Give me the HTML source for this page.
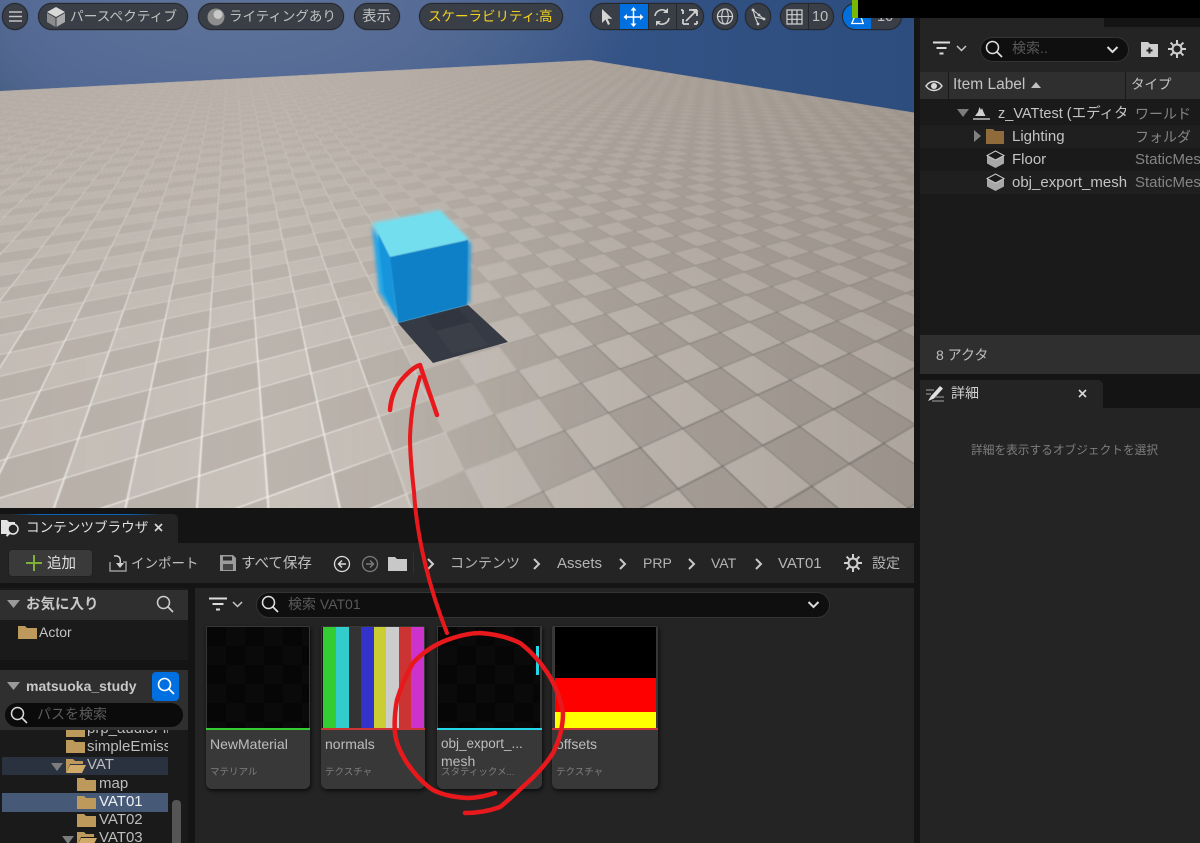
<!DOCTYPE html>
<html lang="ja"><head><meta charset="utf-8"><title>UE</title>
<style>
html,body{margin:0;padding:0;background:#141414}
#r{position:relative;width:1200px;height:843px;overflow:hidden;background:#141414;font-family:"Liberation Sans","Noto Sans CJK JP",sans-serif;font-size:14px;color:#c0c0c0}
#r div,#r span,#r svg{position:absolute}
.t{white-space:nowrap;line-height:20px;height:20px}
#vp{left:0;top:0;width:914px;height:508px;overflow:hidden;background:radial-gradient(ellipse 420px 180px at 230px 0,#5f7399 0,#566c96 45%,rgba(70,95,140,0) 100%),linear-gradient(90deg,#3f5678 0,#4b628e 8%,#46608c 40%,#345386 65%,#2d4d7e 100%)}
.layer{left:0;top:0;width:914px;height:508px;overflow:hidden}
.big{left:-10px;top:-10px;width:934px;height:528px;overflow:hidden}
.o{left:10px;top:10px;width:0;height:0}
.pl{left:0;top:0;width:2600px;height:2600px;transform-origin:0 0;transform:matrix3d(-.062976,-.0005429,0,-.00027145,-.234625,-.000869,0,-.00014483,0,0,1,0,590,60,0,1);clip-path:polygon(0 0,2600px 0,2600px 1548px,2039px 2600px,0 2600px)}
.chk{background:repeating-conic-gradient(#c8c1ba 0 25%,#bbb4ad 0 50%) 0 0/80px 80px}
.chk2{background:repeating-conic-gradient(rgba(60,50,40,0) 0 25%,rgba(60,50,40,.08) 0 50%) 0 0/80px 80px}
.wl{background:linear-gradient(90deg,rgba(248,246,242,.9) 1.3px,transparent 0) 0 0/40px 40px,linear-gradient(rgba(248,246,242,.9) .9px,transparent 0) 0 0/40px 40px}
.dl{background:linear-gradient(90deg,rgba(80,82,80,.45) 1px,transparent 0) 0 0/40px 40px,linear-gradient(rgba(80,82,80,.45) .7px,transparent 0) 0 0/40px 40px}
.pill{background:#3a3f47;border:1px solid #25282d;border-radius:14px;box-sizing:border-box;height:27px;top:3px;box-shadow:0 0 1px #22252a}
.ic{overflow:visible}
.card{top:626px;width:104px;height:163px;background:#383838;border-radius:2px 2px 6px 6px;box-shadow:1px 2px 4px rgba(0,0,0,.7);overflow:hidden}
.th{left:1px;top:1px;width:102px;height:101px;background:repeating-conic-gradient(#0a0a0a 0 25%,#060606 0 50%) 0 0/38px 38px}
.n{left:4px;top:108px;color:#bdbdbd;font-size:14px}
.s{left:4px;top:137px;color:#7f7f7f;font-size:9.500px}
.g{color:#858585}
.f15{font-size:15px}
</style></head><body><div id="r">

<div id="vp">
 <div class="layer" style="clip-path:polygon(590px 60px,914px 112.500px,914px 508px,0 508px,0 91px)">
  <div class="big" style="filter:blur(.6px)">
   <div class="o"><div class="pl chk"></div></div>
   <div class="big" style="left:0;top:0;-webkit-mask-image:linear-gradient(90deg,transparent 410px,#000 620px);mask-image:linear-gradient(90deg,transparent 410px,#000 620px)"><div class="o"><div class="pl chk2"></div></div></div>
   <div class="big" style="left:0;top:0;-webkit-mask-image:linear-gradient(90deg,#000 0,#000 350px,transparent 500px);mask-image:linear-gradient(90deg,#000 0,#000 350px,transparent 500px)"><div class="o"><div class="pl wl"></div></div></div>
   <div class="big" style="left:0;top:0;-webkit-mask-image:linear-gradient(90deg,transparent 450px,#000 650px);mask-image:linear-gradient(90deg,transparent 450px,#000 650px)"><div class="o"><div class="pl dl"></div></div></div>
  </div>
  <div class="layer" style="background:linear-gradient(180deg,rgba(182,173,165,.8) 60px,rgba(182,173,165,.55) 150px,rgba(182,173,165,0) 340px)"></div>
  <div class="layer" style="background:linear-gradient(90deg,rgba(70,58,48,.03) 0,rgba(70,58,48,0) 30%,rgba(70,58,48,.05) 50%,rgba(70,58,48,.2) 100%)"></div>
 </div>
 <svg class="layer" viewBox="0 0 914 508" style="overflow:hidden">
  <defs><filter id="b" x="-30%" y="-30%" width="160%" height="160%"><feGaussianBlur stdDeviation="1.800"/></filter><filter id="c"><feGaussianBlur stdDeviation=".5"/></filter></defs>
  <polygon points="398,323 468,305 508,342 433,363" fill="#353a44"/>
  <polygon points="425,316 458,308 470,322 436,331" fill="#31353f"/>
  <polygon points="436,331 470,322 488,345 452,354" fill="#3a3f48"/>
  <g filter="url(#b)">
   <polygon points="372,225 390,257 398,321 379,292" fill="#22a4e6"/>
   <polygon points="372,223 440,210 470,240 390,257" fill="#78dff0"/>
   <polygon points="466,242 471,242 470,303 466,303" fill="#2b9ad8"/>
  </g>
  <g filter="url(#c)">
   <polygon points="376,225 440,212 466,240 390,257" fill="#72deee"/>
   <polygon points="390,257 468,240 467,305 398,323" fill="#0a80c8"/>
   <polygon points="378,234 390,257 397,320 384,292" fill="#1595dc"/>
  </g>
 </svg>
 <div class="pill" style="left:2px;width:26px"></div>
 <svg class="ic" style="left:0;top:0" width="30" height="30"><path d="M9 12h13M9 16.500h13M9 21h13" stroke="#c4c4c4" stroke-width="1.400"/></svg>
 <div class="pill" style="left:38px;width:150px"></div>
 <svg class="ic" style="left:45px;top:6px" width="22" height="22"><polygon points="11,1 20,6 11,11 2,6" fill="#d8d8d8"/><polygon points="2,7 10.500,12 10.500,21 2,16" fill="#8c8c8c"/><polygon points="20,7 11.500,12 11.500,21 20,16" fill="#a8a8a8"/></svg>
 <span class="t" style="left:70px;top:7px;font-size:13.700px">パースペクティブ</span>
 <div class="pill" style="left:198px;width:146px"></div>
 <svg class="ic" style="left:206px;top:7px" width="20" height="20"><circle cx="10" cy="10" r="8.500" fill="#8e8e8e"/><circle cx="12" cy="7.500" r="4.500" fill="#c8c8c8"/></svg>
 <span class="t" style="left:229px;top:7px;font-size:13.500px">ライティングあり</span>
 <div class="pill" style="left:354px;width:46px"></div>
 <span class="t" style="left:362px;top:7px;font-size:14.500px">表示</span>
 <div class="pill" style="left:419px;width:144px"></div>
 <span class="t" style="left:428px;top:7px;font-size:13.500px;color:#f3d21e">スケーラビリティ:高</span>

 <div class="pill" style="left:590px;width:114px;overflow:hidden"><div style="left:29px;top:0;width:29px;height:27px;background:#0070e0"></div></div>
 <svg class="ic" style="left:590px;top:3px" width="114" height="27">
  <path d="M12 6v14l3.500-3.500 2.500 5.500 2-1-2.500-5.300h4.800z" fill="#d4d4d4"/>
  <path d="M43.500 6v16M35.500 14h16" stroke="#fff" stroke-width="1.500"/><path d="M43.500 4l-3 3.500h6zM43.500 24l-3-3.500h6zM33.500 14l3.500-3v6zM53.500 14l-3.500-3v6z" fill="#fff"/>
  <path d="M65 13a7 7 0 0 1 12-4M79 15a7 7 0 0 1-12 4" stroke="#cfcfcf" stroke-width="1.600" fill="none"/><path d="M78 5v5h-5zM66 23v-5h5z" fill="#cfcfcf"/>
  <path d="M93 7h-2M93 7v4M106 7h-7M107 7v6M93 21v-5M93 21h6M107 21h-3M107 21v-3" stroke="#cfcfcf" stroke-width="1.800" fill="none"/><path d="M96 18l9-9" stroke="#cfcfcf" stroke-width="1.600"/><path d="M107 6v6l-6-6z" fill="#cfcfcf"/>
  <path d="M58.500 0v27M86.500 0v27" stroke="#25282d"/>
 </svg>
 <div class="pill" style="left:712px;width:26px"></div>
 <svg class="ic" style="left:712px;top:3px" width="26" height="27"><circle cx="13" cy="13.500" r="7.500" fill="none" stroke="#d0d0d0" stroke-width="1.300"/><ellipse cx="13" cy="13.500" rx="3.300" ry="7.500" fill="none" stroke="#d0d0d0" stroke-width="1.100"/><path d="M5.500 13.500h15" stroke="#d0d0d0" stroke-width="1.100"/></svg>
 <div class="pill" style="left:745px;width:26px"></div>
 <svg class="ic" style="left:745px;top:3px" width="26" height="27"><path d="M8 7l2 7 9 2-5-4zM10 14l3 7" fill="none" stroke="#d0d0d0" stroke-width="1.100"/><circle cx="8" cy="7" r="1.400" fill="#d0d0d0"/><circle cx="14" cy="12" r="1.400" fill="#d0d0d0"/><circle cx="19" cy="16" r="1.400" fill="#d0d0d0"/><circle cx="13" cy="21" r="1.400" fill="#d0d0d0"/></svg>
 <div class="pill" style="left:780px;width:54px"></div>
 <svg class="ic" style="left:780px;top:3px" width="54" height="27"><path d="M7 7h15v14H7zM12 7v14M17 7v14M7 11.700h15M7 16.300h15" fill="none" stroke="#cfcfcf" stroke-width="1.200"/><path d="M28.500 0v27" stroke="#25282d"/></svg>
 <span class="t" style="left:812px;top:7px;font-size:14.500px">10</span>
 <div class="pill" style="left:842px;width:60px;overflow:hidden"><div style="left:0;top:0;width:28px;height:27px;background:#0070e0"></div></div>
 <svg class="ic" style="left:842px;top:3px" width="30" height="27"><path d="M9 20.500h13M15 8l-5 12M17 8l4 12" stroke="#fff" stroke-width="1.300" fill="none"/></svg>
 <span class="t" style="left:877px;top:7px;font-size:14.500px">10</span>
</div>

<!-- bottom left panel -->
<div style="left:0;top:514px;width:178px;height:29px;background:#242424;border-radius:0 5px 0 0"></div>
<div style="left:10px;top:514px;width:150px;height:1px;background:linear-gradient(90deg,transparent,#0b62b8 20%,#0b62b8 80%,transparent)"></div>
<svg class="ic" style="left:0;top:518px" width="22" height="20"><path d="M1 2h6l2 2h6v12H1z" fill="#e4e4e4"/><circle cx="13" cy="11" r="5" fill="#242424" stroke="#e4e4e4" stroke-width="1.500"/><path d="M9.500 15l-3 3" stroke="#e4e4e4" stroke-width="2"/></svg>
<span class="t" style="left:26px;top:518px;font-size:13.600px;color:#e0e0e0">コンテンツブラウザ</span>
<svg class="ic" style="left:154px;top:523px" width="9" height="9"><path d="M1 1l7 7M8 1l-7 7" stroke="#d8d8d8" stroke-width="1.600"/></svg>

<div style="left:0;top:543px;width:914px;height:40px;background:#242424"></div>
<div style="left:9px;top:550px;width:83px;height:26px;background:#3a3a3a;border-radius:3px;box-shadow:0 0 1px #111"></div>
<svg class="ic" style="left:25px;top:553px" width="18" height="20"><path d="M9 2v16M1 10h16" stroke="#7fb03a" stroke-width="2"/></svg>
<span class="t" style="left:47px;top:554px;font-size:14.500px;color:#e0e0e0">追加</span>
<svg class="ic" style="left:108px;top:554px" width="20" height="18"><path d="M2 8v9h16V8h-3" fill="none" stroke="#9a9a9a" stroke-width="1.500"/><path d="M6 2c6-1 7 3 6 8" fill="none" stroke="#cfcfcf" stroke-width="1.500"/><path d="M8 9l4 5 4-5z" fill="#cfcfcf"/></svg>
<span class="t" style="left:131px;top:553.500px;font-size:13.500px">インポート</span>
<svg class="ic" style="left:220px;top:555px" width="17" height="16"><path d="M0 0h13l3 3v13H0z" fill="#9c9c9c"/><rect x="3" y="1.500" width="9" height="4" fill="#2a2a2a"/><rect x="3" y="9" width="10" height="6" fill="#444"/></svg>
<span class="t" style="left:241px;top:554px;font-size:14.500px">すべて保存</span>
<svg class="ic" style="left:333px;top:555px" width="18" height="18"><circle cx="9" cy="9" r="7.500" fill="none" stroke="#dcdcdc" stroke-width="1.300"/><path d="M13 9H6M9 5.500L5.500 9 9 12.500" fill="none" stroke="#dcdcdc" stroke-width="1.400"/></svg>
<svg class="ic" style="left:361px;top:555px" width="18" height="18"><circle cx="9" cy="9" r="7.500" fill="none" stroke="#7c7c7c" stroke-width="1.300"/><path d="M5 9h7M9 5.500L12.500 9 9 12.500" fill="none" stroke="#7c7c7c" stroke-width="1.400"/></svg>
<svg class="ic" style="left:388px;top:556px" width="20" height="15"><path d="M0 1h7l2 2h10v12H0z" fill="#c8c8c8"/></svg>
<div style="left:413px;top:552px;width:1px;height:22px;background:#2f2f2f"></div>
<svg class="ic" style="left:426px;top:558px" width="9" height="12"><path d="M2 1l5 5-5 5" fill="none" stroke="#d0d0d0" stroke-width="2"/></svg>
<span class="t" style="left:450px;top:553px;color:#b4b4b4">コンテンツ</span>
<svg class="ic" style="left:532px;top:558px" width="9" height="12"><path d="M2 1l5 5-5 5" fill="none" stroke="#c8c8c8" stroke-width="2"/></svg>
<span class="t f15" style="left:557px;top:553.500px;color:#b4b4b4">Assets</span>
<svg class="ic" style="left:618px;top:558px" width="9" height="12"><path d="M2 1l5 5-5 5" fill="none" stroke="#c8c8c8" stroke-width="2"/></svg>
<span class="t" style="left:643px;top:553px;color:#b4b4b4">PRP</span>
<svg class="ic" style="left:687px;top:558px" width="9" height="12"><path d="M2 1l5 5-5 5" fill="none" stroke="#c8c8c8" stroke-width="2"/></svg>
<span class="t" style="left:711px;top:553px;color:#b4b4b4">VAT</span>
<svg class="ic" style="left:754px;top:558px" width="9" height="12"><path d="M2 1l5 5-5 5" fill="none" stroke="#c8c8c8" stroke-width="2"/></svg>
<span class="t f15" style="left:778px;top:553.500px;color:#b4b4b4">VAT01</span>
<svg class="ic" style="left:844px;top:554px" width="18" height="18"><circle cx="9" cy="9" r="4.500" fill="none" stroke="#d0d0d0" stroke-width="2"/><path d="M9 0v4M9 14v4M0 9h4M14 9h4M2.600 2.600l2.800 2.800M12.600 12.600l2.800 2.800M2.600 15.400l2.800-2.800M12.600 5.400l2.800-2.800" stroke="#d0d0d0" stroke-width="2"/></svg>
<span class="t" style="left:872px;top:553px;color:#b4b4b4">設定</span>

<!-- sidebar -->
<div style="left:0;top:588px;width:188px;height:255px;background:#1a1a1a"></div>
<div style="left:0;top:590px;width:188px;height:30px;background:#2f2f2f"></div>
<svg class="ic" style="left:7px;top:600px" width="13" height="9"><path d="M0 0h13L6.500 8z" fill="#9a9a9a"/></svg>
<span class="t" style="left:26px;top:595px;font-weight:bold;font-size:14.500px;color:#c8c8c8">お気に入り</span>
<svg class="ic" style="left:156px;top:595px" width="18" height="18"><circle cx="7.500" cy="7.500" r="6" fill="none" stroke="#cfcfcf" stroke-width="1.500"/><path d="M12 12l5 5" stroke="#cfcfcf" stroke-width="1.600"/></svg>
<svg class="ic" style="left:18px;top:625px" width="19" height="14"><path d="M0 1h7l2 2h10v11H0z" fill="#bd9a5c"/></svg>
<span class="t" style="left:39px;top:622px;color:#c4c4c4">Actor</span>
<div style="left:0;top:660px;width:188px;height:10px;background:#141414"></div>
<div style="left:0;top:670px;width:188px;height:60px;background:#2f2f2f"></div>
<svg class="ic" style="left:7px;top:682px" width="13" height="9"><path d="M0 0h13L6.500 8z" fill="#9a9a9a"/></svg>
<span class="t" style="left:26px;top:676px;font-weight:bold;color:#c8c8c8">matsuoka_study</span>
<div style="left:152px;top:672px;width:27px;height:29px;background:#0070e0;border-radius:4px"></div>
<svg class="ic" style="left:157px;top:677px" width="18" height="18"><circle cx="7.500" cy="7.500" r="6" fill="none" stroke="#fff" stroke-width="1.600"/><path d="M12 12l5 5" stroke="#fff" stroke-width="1.700"/></svg>
<div style="left:5px;top:703px;width:178px;height:24px;background:#0b0b0b;border-radius:12px"></div>
<svg class="ic" style="left:10px;top:706px" width="18" height="18"><circle cx="7.500" cy="7.500" r="6" fill="none" stroke="#d8d8d8" stroke-width="1.500"/><path d="M12 12l5 5" stroke="#d8d8d8" stroke-width="1.600"/></svg>
<span class="t" style="left:37px;top:704px;color:#5c5c5c">パスを検索</span>
<div style="left:0;top:730px;width:168px;height:113px;overflow:hidden">
 <svg class="ic" style="left:66px;top:-8px" width="20" height="16"><path d="M0 1h7l2 2h10v12H0z" fill="#bd9a5c"/></svg>
 <span class="t" style="left:87px;top:-11px;font-size:15px;color:#bdbdbd">prp_audioFiles</span>
 <svg class="ic" style="left:66px;top:9px" width="20" height="15"><path d="M0 1h7l2 2h10v11H0z" fill="#bd9a5c"/></svg>
 <span class="t" style="left:87px;top:7px;font-size:15px;color:#bdbdbd">simpleEmissive</span>
 <div style="left:2px;top:27px;width:166px;height:18px;background:#2a3240"></div>
 <svg class="ic" style="left:51px;top:33px" width="13" height="9"><path d="M0 0h12L6 8z" fill="#7c7c7c"/></svg>
 <svg class="ic" style="left:66px;top:28px" width="20" height="15"><path d="M0 15V1h7l2 2h8v3H4z" fill="#bd9a5c"/><path d="M0 15L4 7h16l-4 8z" fill="#d0aa68"/></svg>
 <span class="t" style="left:87px;top:25px;font-size:15px;color:#bdbdbd">VAT</span>
 <svg class="ic" style="left:77px;top:47px" width="20" height="15"><path d="M0 1h7l2 2h10v11H0z" fill="#bd9a5c"/></svg>
 <span class="t" style="left:99px;top:44px;font-size:15px;color:#bdbdbd">map</span>
 <div style="left:2px;top:63px;width:166px;height:19px;background:#465a78"></div>
 <svg class="ic" style="left:77px;top:65px" width="20" height="15"><path d="M0 1h7l2 2h10v11H0z" fill="#bd9a5c"/></svg>
 <span class="t" style="left:99px;top:62px;font-size:15px;color:#f0f0f0">VAT01</span>
 <svg class="ic" style="left:77px;top:83px" width="20" height="15"><path d="M0 1h7l2 2h10v11H0z" fill="#bd9a5c"/></svg>
 <span class="t" style="left:99px;top:80px;font-size:15px;color:#bdbdbd">VAT02</span>
 <svg class="ic" style="left:62px;top:106px" width="13" height="9"><path d="M0 0h12L6 8z" fill="#7c7c7c"/></svg>
 <svg class="ic" style="left:77px;top:101px" width="20" height="15"><path d="M0 15V1h7l2 2h8v3H4z" fill="#bd9a5c"/><path d="M0 15L4 7h16l-4 8z" fill="#d0aa68"/></svg>
 <span class="t" style="left:99px;top:98px;font-size:15px;color:#bdbdbd">VAT03</span>
</div>
<div style="left:172px;top:800px;width:9px;height:50px;background:#555;border-radius:4px"></div>

<!-- content -->
<div style="left:195px;top:588px;width:719px;height:255px;background:#242424"></div>
<svg class="ic" style="left:209px;top:597px" width="34" height="16"><path d="M0 1.500h18M3.500 7h11M7 12.500h4" stroke="#dcdcdc" stroke-width="2"/><path d="M24 5l4.500 4.500L33 5" fill="none" stroke="#c8c8c8" stroke-width="1.500"/></svg>
<div style="left:256px;top:592px;width:574px;height:26px;box-sizing:border-box;background:#0f0f0f;border:1px solid #333;border-radius:13px"></div>
<svg class="ic" style="left:261px;top:595px" width="18" height="18"><circle cx="7.500" cy="7.500" r="6" fill="none" stroke="#e0e0e0" stroke-width="1.500"/><path d="M12 12l5 5" stroke="#e0e0e0" stroke-width="1.700"/></svg>
<span class="t" style="left:288px;top:594px;color:#5a5a5a">検索 VAT01</span>
<svg class="ic" style="left:807px;top:600px" width="13" height="10"><path d="M1.500 2l5 5 5-5" fill="none" stroke="#dcdcdc" stroke-width="2"/></svg>

<div class="card" style="left:206px"><div class="th"></div><div style="left:0;top:102px;width:104px;height:2px;background:#33cc33"></div><span class="t n">NewMaterial</span><span class="t s">マテリアル</span></div>
<div class="card" style="left:321px"><div class="th" style="background:#111"></div>
 <div style="left:2px;top:1px;width:13px;height:101px;background:#33cc33"></div><div style="left:15px;top:1px;width:12.500px;height:101px;background:#33cccc"></div><div style="left:27.500px;top:1px;width:12.500px;height:101px;background:#333"></div><div style="left:40px;top:1px;width:12.500px;height:101px;background:#3333cc"></div><div style="left:52.500px;top:1px;width:12.500px;height:101px;background:#cccc33"></div><div style="left:65px;top:1px;width:13px;height:101px;background:#ccc"></div><div style="left:78px;top:1px;width:12px;height:101px;background:#cc3333"></div><div style="left:90px;top:1px;width:12.500px;height:101px;background:#cc33cc"></div>
 <div style="left:0;top:102px;width:104px;height:2px;background:#cc3333"></div><span class="t n">normals</span><span class="t s">テクスチャ</span></div>
<div class="card" style="left:437px;width:105px"><div class="th"></div><div style="left:99px;top:20px;width:3px;height:29px;background:#22d8e8"></div><div style="left:0;top:102px;width:105px;height:2px;background:#22d8e8"></div><span class="t n" style="font-size:13.500px">obj_export_...</span><span class="t n" style="top:125px">mesh</span><span class="t s">スタティックメ...</span></div>
<div class="card" style="left:552px;width:106px"><div style="left:3px;top:1px;width:101px;height:51px;background:#000"></div><div style="left:3px;top:52px;width:101px;height:34px;background:#f00"></div><div style="left:3px;top:86px;width:101px;height:16px;background:#ff0"></div><div style="left:0;top:102px;width:106px;height:2px;background:#cc3333"></div><span class="t n">offsets</span><span class="t s">テクスチャ</span></div>

<!-- right panel -->
<div style="left:920px;top:0;width:280px;height:335px;background:#1a1a1a"></div>
<div style="left:920px;top:18px;width:184px;height:9px;background:#242424"></div>
<div style="left:1104px;top:18px;width:96px;height:9px;background:#141414"></div>
<div style="left:920px;top:27px;width:280px;height:45px;background:#242424"></div>
<div style="left:852px;top:0;width:6px;height:18px;background:#76b900"></div>
<div style="left:858px;top:0;width:342px;height:18px;background:#000"></div>
<svg class="ic" style="left:933px;top:41px" width="36" height="16"><path d="M0 1.500h17M3.500 7h10M6.500 12.500h4" stroke="#dcdcdc" stroke-width="2"/><path d="M24 5l4.500 4.500L33 5" fill="none" stroke="#c8c8c8" stroke-width="1.500"/></svg>
<div style="left:980px;top:37px;width:149px;height:25px;box-sizing:border-box;background:#0f0f0f;border:1px solid #333;border-radius:13px"></div>
<svg class="ic" style="left:985px;top:40px" width="18" height="18"><circle cx="7.500" cy="7.500" r="6" fill="none" stroke="#e0e0e0" stroke-width="1.500"/><path d="M12 12l5 5" stroke="#e0e0e0" stroke-width="1.700"/></svg>
<span class="t" style="left:1012px;top:38px;color:#5a5a5a">検索..</span>
<svg class="ic" style="left:1106px;top:45px" width="13" height="10"><path d="M1.500 2l5 5 5-5" fill="none" stroke="#dcdcdc" stroke-width="2"/></svg>
<svg class="ic" style="left:1141px;top:41px" width="17" height="16"><path d="M0 1h7l2 2h8v13H0z" fill="#cfcfcf"/><path d="M8.500 6.500v6M5.500 9.500h6" stroke="#222" stroke-width="2"/></svg>
<svg class="ic" style="left:1168px;top:40px" width="18" height="18"><circle cx="9" cy="9" r="4.500" fill="none" stroke="#d0d0d0" stroke-width="2"/><path d="M9 0v4M9 14v4M0 9h4M14 9h4M2.600 2.600l2.800 2.800M12.600 12.600l2.800 2.800M2.600 15.400l2.800-2.800M12.600 5.400l2.800-2.800" stroke="#d0d0d0" stroke-width="2"/></svg>
<div style="left:920px;top:72px;width:28px;height:27px;background:#2f2f2f"></div>
<div style="left:949px;top:72px;width:176px;height:27px;background:#2f2f2f"></div>
<div style="left:1126px;top:72px;width:74px;height:27px;background:#2f2f2f"></div>
<svg class="ic" style="left:925px;top:79px" width="18" height="14"><path d="M1 7c4-6 12-6 16 0-4 6-12 6-16 0z" fill="none" stroke="#d8d8d8" stroke-width="1.500"/><circle cx="9" cy="7" r="3" fill="#d8d8d8"/></svg>
<span class="t" style="left:953px;top:75px;color:#c4c4c4;font-size:15.500px">Item Label</span>
<svg class="ic" style="left:1031px;top:82px" width="10" height="6"><path d="M0 6h10L5 0z" fill="#c0c0c0"/></svg>
<span class="t" style="left:1131px;top:75px;color:#c4c4c4;font-size:13.500px">タイプ</span>
<div style="left:920px;top:125px;width:280px;height:23px;background:#1f1f1f"></div>
<div style="left:920px;top:171px;width:280px;height:23px;background:#1f1f1f"></div>
<svg class="ic" style="left:957px;top:109px" width="13" height="9"><path d="M0 0h12L6 8z" fill="#7c7c7c"/></svg>
<svg class="ic" style="left:972px;top:105px" width="20" height="16"><path d="M3 11l3-4 1.500-5 1.500 3 1-2 1.500 4 2 4z" fill="#d0d0d0"/><path d="M1 14h17" stroke="#c0c0c0" stroke-width="1.500"/></svg>
<div style="left:998px;top:104px;width:128px;height:20px;overflow:hidden"><span class="t" style="left:0;top:0;color:#c4c4c4;font-size:14.500px">z_VATtest (エディタ)</span></div>
<span class="t g" style="left:1135px;top:104px">ワールド</span>
<svg class="ic" style="left:973px;top:130px" width="9" height="13"><path d="M1 0v12l7-6z" fill="#808080"/></svg>
<svg class="ic" style="left:985px;top:128px" width="20" height="16"><path d="M1 1h7l2 2h9v13H1z" fill="#8f6a3a"/></svg>
<span class="t f15" style="left:1012px;top:127px;color:#c4c4c4">Lighting</span>
<span class="t g" style="left:1135px;top:127px">フォルダ</span>
<svg class="ic" style="left:986px;top:150px" width="19" height="19"><path d="M9.500 1L18 5.500v8L9.500 18 1 13.500v-8z" fill="#a8a8a8"/><path d="M9.500 1L18 5.500 9.500 10 1 5.500z" fill="#1a1a1a" stroke="#c8c8c8"/></svg>
<span class="t f15" style="left:1012px;top:150px;color:#c4c4c4">Floor</span>
<span class="t g f15" style="left:1135px;top:150px;width:65px;overflow:hidden">StaticMesh</span>
<svg class="ic" style="left:986px;top:173px" width="19" height="19"><path d="M9.500 1L18 5.500v8L9.500 18 1 13.500v-8z" fill="#a8a8a8"/><path d="M9.500 1L18 5.500 9.500 10 1 5.500z" fill="#1a1a1a" stroke="#c8c8c8"/></svg>
<span class="t f15" style="left:1012px;top:173px;color:#c4c4c4">obj_export_mesh</span>
<span class="t g f15" style="left:1135px;top:173px;width:65px;overflow:hidden">StaticMesh</span>

<div style="left:920px;top:335px;width:280px;height:39px;background:#2f2f2f"></div>
<span class="t" style="left:936px;top:345px;color:#bdbdbd">8 アクタ</span>
<div style="left:920px;top:380px;width:183px;height:28px;background:#242424;border-radius:0 5px 0 0"></div>
<div style="left:920px;top:408px;width:280px;height:435px;background:#242424"></div>
<svg class="ic" style="left:926px;top:385px" width="20" height="18"><path d="M2 16l3-5L14 1l3 2.500-9 10z" fill="#e0e0e0"/><path d="M0 5h8M0 9h5M9 12h9M6 16h12" stroke="#8a8a8a" stroke-width="1.200"/></svg>
<span class="t" style="left:951px;top:383px;color:#d0d0d0">詳細</span>
<svg class="ic" style="left:1078px;top:389px" width="9" height="9"><path d="M1 1l7 7M8 1l-7 7" stroke="#d8d8d8" stroke-width="1.600"/></svg>
<span class="t" style="left:971px;top:441px;font-size:11.700px;color:#7e7e7e">詳細を表示するオブジェクトを選択</span>

<!-- red annotation -->
<svg style="left:0;top:0" width="1200" height="843" viewBox="0 0 1200 843" fill="none" stroke="#e8191c" stroke-width="4.500" stroke-linecap="round" stroke-linejoin="round">
 <path d="M390 410C391 396 396 384 407 374C412 369 416 366 420 365L425 380L437 415"/>
 <path d="M420 377C414 396 411 412 410 437C410 456 412 474 414 492C417 540 430 590 447 633" stroke-width="4"/>
 <path d="M495 793C485 796 477 798 467 798C453 797 443 795 433 790C422 783 414 773 407 763C400 752 396 743 395 733C394 722 395 711 397 700C401 687 406 675 413 663C423 652 434 645 447 640C458 636 469 633 480 633C495 634 508 637 520 643C532 652 542 664 550 677C557 689 561 701 563 713C563 727 559 741 553 753C546 764 537 774 527 783C518 791 509 800 500 807C489 811 477 813 465 813"/>
</svg>
</div></body></html>
